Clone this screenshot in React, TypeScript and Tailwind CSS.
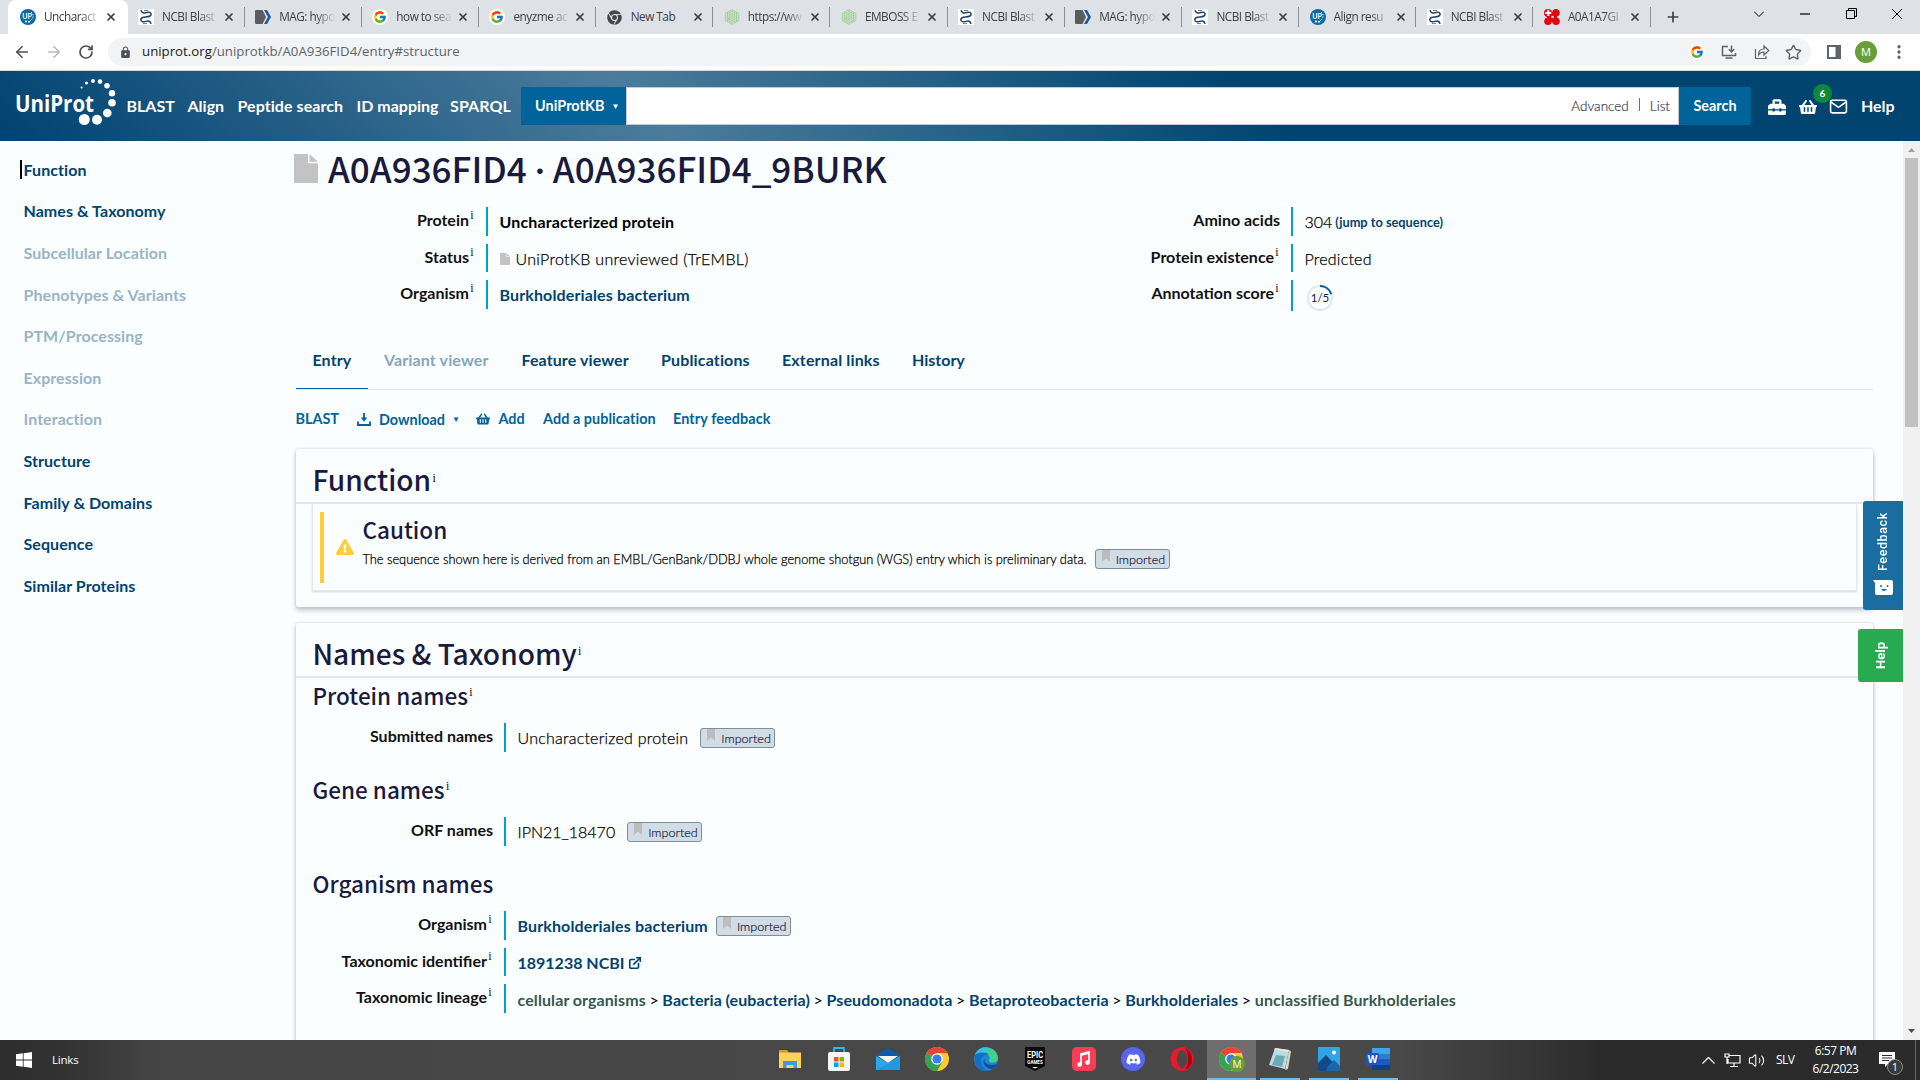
import React from "react";
import { ArrowLeft, ArrowRight, RotateCw, X, Plus, MoreVertical, Star, Volume2 } from "lucide-react";
import { FcGoogle } from "react-icons/fc";
import { FaShoppingBasket, FaToolbox, FaDiscord, FaExclamationTriangle, FaChrome } from "react-icons/fa";
import { FiMail, FiExternalLink } from "react-icons/fi";
import { MdLock } from "react-icons/md";

const UniFav = () => (
  <svg width="16" height="16" viewBox="0 0 16 16">
    <circle cx="8" cy="8" r="8" fill="#0b6aa2" />
    <text x="2.2" y="9.6" fontSize="7" fontWeight="700" fill="#fff" fontFamily="Lato">UP</text>
    <path d="M11 3.500c3 1 3 6-1 8.500" stroke="#fff" strokeWidth="1" strokeDasharray="1.2 1.2" fill="none" />
    <circle cx="6" cy="12.500" r="1.100" fill="#fff" /><circle cx="9" cy="12.800" r="1" fill="#fff" />
  </svg>
);
const NcbiFav = () => (
  <svg width="16" height="16" viewBox="0 0 16 16">
    <rect width="16" height="16" fill="#fff" />
    <path d="M3 1.200C3.500 4 6 4.300 9 3.600s4.500.2 4 2.200-3 2-5.500 2.100S2.600 9 2.800 11s3 2 5.200 1.400 4.500-.4 5 2.400" fill="none" stroke="#20406a" strokeWidth="1.500" />
    <path d="M6 1.500h4M5 14.600h4" stroke="#5d7899" strokeWidth="1" />
  </svg>
);
const MagFav = () => (
  <svg width="16" height="16" viewBox="0 0 16 16">
    <path d="M0 2a1 1 0 0 1 1-1h6.500L11 8l-3.500 7H1a1 1 0 0 1-1-1z" fill="#5b5c5f" />
    <path d="M9 1h3l4 7-4 7H9l4-7z" fill="#1b5a96" />
  </svg>
);
const GoogleFav = () => (
  <span className="flex size-4 items-center justify-center rounded-full bg-white"><FcGoogle size={14} /></span>
);
const ChromeDark = () => (
  <span className="flex size-4 items-center justify-center text-[#44474b]"><FaChrome size={15} /></span>
);
const EmbossFav = () => (
  <svg width="16" height="16" viewBox="0 0 16 16">
    <path d="M8 .5l6.800 3.700v7.600L8 15.500l-6.800-3.700V4.200z" fill="#c5dfc3" stroke="#8cc98a" strokeWidth="1" strokeDasharray="1 1" />
    <path d="M3.500 4v8M5.800 3v10.500M8 2v12M10.300 3v10.500M12.500 4v8" stroke="#8ac487" strokeWidth="1" strokeDasharray="1.200 1" />
    <rect x="4" y="9" width="1.500" height="1.500" fill="#f0a79a" />
  </svg>
);
const RedFav = () => (
  <svg width="16" height="16" viewBox="0 0 16 16" fill="#e30613">
    <circle cx="4" cy="4" r="4" /><circle cx="12" cy="3.800" r="3.800" /><circle cx="4" cy="12.200" r="3.800" /><circle cx="12" cy="12.200" r="3.800" />
    <rect x="3" y="3" width="10" height="10" />
    <path d="M4.300 1v6M1.300 4h6" stroke="#fff" strokeWidth="2" /><circle cx="8.500" cy="8" r="1.300" fill="#fff" opacity=".8" />
  </svg>
);

const tabs: { t: string; f: () => React.JSX.Element }[] = [
  { t: "Uncharact", f: UniFav },
  { t: "NCBI Blast", f: NcbiFav },
  { t: "MAG: hypo", f: MagFav },
  { t: "how to sea", f: GoogleFav },
  { t: "enyzme ac", f: GoogleFav },
  { t: "New Tab", f: ChromeDark },
  { t: "https://ww", f: EmbossFav },
  { t: "EMBOSS E", f: EmbossFav },
  { t: "NCBI Blast", f: NcbiFav },
  { t: "MAG: hypo", f: MagFav },
  { t: "NCBI Blast", f: NcbiFav },
  { t: "Align resu", f: UniFav },
  { t: "NCBI Blast", f: NcbiFav },
  { t: "A0A1A7GI", f: RedFav },
];

function TabStrip() {
  return (
    <div className="flex h-[34px] bg-[#dee1e6] pl-2 font-['Open_Sans',sans-serif]">
      {tabs.map(({ t, f: Fav }, i) => (
        <div
          key={i}
          className={
            i === 0
              ? "flex h-[34px] w-[119.500px] shrink-0 items-center rounded-t-lg bg-white pl-3"
              : "flex h-[34px] w-[117.170px] shrink-0 items-center pl-[10.500px]"
          }
        >
          <Fav />
          <span
            className={
              "ml-2 w-[59px] whitespace-nowrap text-[11.800px] tracking-[-0.500px] text-[#3c4043] " +
              (t === "New Tab" ? "" : "[mask-image:linear-gradient(90deg,#000_62%,transparent_96%)]")
            }
          >
            {t}
          </span>
          <X size={12} strokeWidth={3.400} className="ml-[2px] shrink-0 text-[#3c4043]" />
          {i > 0 && <span className="ml-auto h-5 w-px bg-[#8a8d91]" />}
        </div>
      ))}
      <Plus size={16} strokeWidth={2.500} className="ml-[14px] mt-[9px] text-[#3c4043]" />
      <div className="ml-auto flex text-black">
        <svg width="10" height="6" viewBox="0 0 10 6" className="mr-[36px] mt-[11px]" fill="none" stroke="#000"><path d="M0 .5l5 5 5-5" /></svg>
        <svg width="10" height="2" viewBox="0 0 10 2" className="mr-[36px] mt-[13px]"><path d="M0 1h10" stroke="#000" strokeWidth="1.200" /></svg>
        <svg width="12" height="12" viewBox="0 0 12 12" className="mr-[33px] mt-[8px]" fill="none" stroke="#000"><path d="M.5 2.500h8v8h-8zM2.500 2.500v-2h8v8h-2" /></svg>
        <svg width="12" height="12" viewBox="0 0 12 12" className="mr-[17px] mt-[8px]" stroke="#000"><path d="M1 1l10 10M11 1L1 11" /></svg>
      </div>
    </div>
  );
}

function Toolbar() {
  return (
    <div className="flex h-[37px] items-center border-b border-[#d5d7da] bg-white font-['Open_Sans',sans-serif]">
      <ArrowLeft size={18} strokeWidth={2.200} className="ml-[13px] text-[#4d5156]" />
      <ArrowRight size={18} strokeWidth={2.200} className="ml-[14px] text-[#b9bbbe]" />
      <RotateCw size={16} strokeWidth={2.600} className="ml-[15px] text-[#4d5156]" />
      <div className="ml-[14px] flex h-7 w-[1703px] items-center rounded-full bg-[#f1f3f4] pl-[11px] pr-[9px]">
        <MdLock size={13} className="text-[#4d5156]" />
        <span className="ml-[10px] whitespace-nowrap text-[13.250px] text-[#5f6368]">
          <span className="text-[#202124]">uniprot.org</span>/uniprotkb/A0A936FID4/entry#structure
        </span>
        <span className="ml-auto flex size-4 items-center justify-center rounded-full bg-white"><FcGoogle size={14} /></span>
        <svg className="ml-[16px]" width="16" height="16" viewBox="0 0 16 16" fill="none" stroke="#5f6368" strokeWidth="1.500"><path d="M7 2.500H1.500v9h13V9M4.500 14h7M10.500 1.500v6M7.800 5.200l2.700 2.700 2.700-2.700" /></svg>
        <svg className="ml-[17px]" width="16" height="16" viewBox="0 0 16 16" fill="none" stroke="#5f6368" strokeWidth="1.200"><path d="M1.500 5v9.500H12V12M4.500 11c0-4 2-6 5.500-6V2l4.800 4.500L10 11V8c-2.500 0-4.200.8-5.500 3z" /></svg>
        <Star size={17} strokeWidth={2} className="ml-[15px] text-[#5f6368]" />
      </div>
      <svg className="ml-[16px]" width="14" height="14" viewBox="0 0 14 14"><path d="M1 1h12v12H1z" fill="none" stroke="#5f6368" strokeWidth="2" /><path d="M8.500 1H13v12H8.500z" fill="#5f6368" /></svg>
      <span className="ml-[14px] flex size-[22px] items-center justify-center rounded-full bg-[#689f38] text-[11px] text-white">M</span>
      <MoreVertical size={18} strokeWidth={2.400} className="ml-[13px] text-[#5f6368]" />
    </div>
  );
}

function Logo() {
  return (
    <svg width="119" height="70" viewBox="0 71 119 70" fill="#fff">
      <text x="15" y="111.500" fontSize="24" fontWeight="700" fontFamily="Open Sans" textLength="79" lengthAdjust="spacingAndGlyphs">UniProt</text>
      <circle cx="81.600" cy="87.600" r="1" /><circle cx="86.500" cy="83" r="1.500" /><circle cx="93" cy="81" r="1.900" />
      <circle cx="100" cy="81.600" r="2.300" /><circle cx="107" cy="85.700" r="2.800" /><circle cx="112" cy="93.200" r="3.200" />
      <circle cx="112" cy="102.700" r="3.800" /><circle cx="107.300" cy="113" r="4.300" /><circle cx="97" cy="119.700" r="5" /><circle cx="84.300" cy="119.500" r="5.500" />
    </svg>
  );
}

function Header() {
  return (
    <header className="flex h-[70px] bg-[linear-gradient(45deg,#004271_0%,#4b7c9c_34%,#00446f_65%)] text-[16px] font-bold text-white">
      <Logo />
      <nav className="flex whitespace-nowrap pl-[7.500px] pt-[23px] leading-6">
        <span className="w-[61px]">BLAST</span>
        <span className="w-[50px]">Align</span>
        <span className="w-[119px] tracking-[0.060px]">Peptide search</span>
        <span className="w-[93.500px]">ID mapping</span>
        <span className="w-[71px] tracking-[0.100px]">SPARQL</span>
      </nav>
      <div className="mt-4 flex h-[38px]">
        <div className="flex w-[105px] items-center bg-[#00639a] pl-[14px] text-[14.400px]">
          <span className="tracking-[0.060px]">UniProtKB</span><span className="ml-[7px] text-[8px]">▼</span>
        </div>
        <div className="flex w-[1053px] items-center justify-end border border-[#c5cad0] bg-white pr-[8px] text-[13.500px] font-light text-[#3a3a58] [-webkit-text-stroke:0.200px]">
          <span>Advanced</span><span className="mx-[10px] mb-1 h-[13px] w-px bg-[#6c6c80]" /><span>List</span>
        </div>
        <div className="flex w-[72px] items-center justify-center bg-[#00639a] text-[14.400px]">Search</div>
      </div>
      <div className="flex pl-[17px] pt-[26px]">
        <FaToolbox size={18} className="mt-px" />
        <div className="relative ml-[13px] mt-px h-[18px] w-[18px]">
          <FaShoppingBasket size={18} />
          <span className="absolute -top-[14px] left-[14px] flex size-[19px] items-center justify-center rounded-full bg-[#0c8a3c] text-[10px]">6</span>
        </div>
        <FiMail size={19} className="ml-[12px]" />
        <span className="ml-[13px] -mt-px leading-5">Help</span>
      </div>
    </header>
  );
}

const side: [string, boolean][] = [
  ["Function", true], ["Names & Taxonomy", true], ["Subcellular Location", false], ["Phenotypes & Variants", false],
  ["PTM/Processing", false], ["Expression", false], ["Interaction", false], ["Structure", true],
  ["Family & Domains", true], ["Sequence", true], ["Similar Proteins", true],
];

function Sidebar() {
  return (
    <aside className="w-[294px] shrink-0 pt-[8px] text-[16px] font-bold tracking-[0.060px]">
      {side.map(([t, on], i) => (
        <div key={t} className="flex h-[41.600px] items-center pl-5">
          <span className={i === 0 ? "h-[19px] w-0.5 bg-black" : "w-0.5"} />
          <span className={on ? "ml-[1.500px] text-[#014371]" : "ml-[1.500px] text-[#99b4c6]"}>{t}</span>
        </div>
      ))}
    </aside>
  );
}

const Sup = ({ cls = "-top-[7px]" }: { cls?: string }) => (
  <span className={"relative inline-block w-[6px] text-center font-['Liberation_Serif',serif] text-[12px] font-normal leading-none text-[#111] " + cls}>i</span>
);

const FileIcon = ({ w, h }: { w: number; h: number }) => (
  <svg width={w} height={h} viewBox="0 0 24 28" preserveAspectRatio="none" fill="#c3c3c3"><path d="M0 0h14v9h10v19H0zM15.500 0L24 7.500h-8.500z" /></svg>
);

function Row({ label, sup, w, h, children }: { label: string; sup?: boolean; w: string; h?: string; children: React.ReactNode }) {
  return (
    <div className={"mb-[8px] flex text-[16px] " + (h ?? "h-[28.600px]")}>
      <div className={"shrink-0 text-right font-bold leading-[26.500px] text-[#111] " + w}>{label}{sup && <Sup />}</div>
      <div className="ml-[11px] flex items-center whitespace-nowrap border-l-2 border-[#009fd6] pl-[11.500px] pt-[2px] font-light text-[#000]">{children}</div>
    </div>
  );
}

const light = "[-webkit-text-stroke:0.250px] tracking-[0.230px]";

const Imported = ({ cls }: { cls: string }) => (
  <span className={"flex h-5 w-[75px] shrink-0 items-start rounded-[3px] border border-[#7c8e9e] bg-[#d2dce4] pl-[6px] text-[12.600px] font-light leading-[20px] tracking-normal text-[#1b1b3c] [-webkit-text-stroke:0.200px] " + cls}>
    <svg width="8" height="12" viewBox="0 0 8 12" className="mr-[6px]"><path d="M0 0h8v12L4 8.500 0 12z" fill="#bdbcbc" /></svg>
    Imported
  </span>
);

const head = "font-['Noto_Sans_CJK_SC',sans-serif] font-medium text-[#1a1a3c]";
const card = "rounded-[3px] bg-[#fbfeff] shadow-[0_3px_5px_#bcbfcd,0_0_3px_#cfd3da]";
const link = "font-bold tracking-[0.130px] text-[#014371]";

function Entry() {
  return (
    <main className="w-[1579px] shrink-0">
      <div className="flex h-[66px] pt-[13px]">
        <FileIcon w={24} h={29} />
        <h1 className={head + " ml-[10px] -mt-px flex whitespace-nowrap text-[35.100px] leading-[30px]"}>
          A0A936FID4<span className="w-[26px] text-center font-['Lato',sans-serif]">·</span>A0A936FID4_9BURK
        </h1>
      </div>
      <div className="flex h-[119px]">
        <div className="w-[805px]">
          <Row label="Protein" sup w="w-[181px]"><span className="font-bold tracking-[0.130px]">Uncharacterized protein</span></Row>
          <Row label="Status" sup w="w-[181px]"><FileIcon w={10} h={12} /><span className="ml-1.5 tracking-[0.300px] [-webkit-text-stroke:0.250px]">UniProtKB unreviewed (TrEMBL)</span></Row>
          <Row label="Organism" sup w="w-[181px]"><span className={link}>Burkholderiales bacterium</span></Row>
        </div>
        <div>
          <Row label="Amino acids" w="w-[181px]"><span className="[-webkit-text-stroke:0.250px]">304</span><span className="ml-[3px] mt-px text-[12.800px] font-bold text-[#014371]">(jump to sequence)</span></Row>
          <Row label="Protein existence" sup w="w-[181px]"><span className={light}>Predicted</span></Row>
          <Row label="Annotation score" sup w="w-[181px]" h="h-[31px]">
            <svg width="26" height="26" viewBox="0 0 26 26" className="ml-[2px] mt-0.5">
              <circle cx="13" cy="13" r="12" fill="none" stroke="#e2e7ea" strokeWidth="2" />
              <path d="M13 1a12 12 0 0 1 11.400 8.300" fill="none" stroke="#00639a" strokeWidth="2" />
              <text x="13" y="17" textAnchor="middle" fontSize="11.500" fontWeight="400" fill="#1a1a3c" fontFamily="Lato">1/5</text>
            </svg>
          </Row>
        </div>
      </div>
      <div className="ml-0.5 flex h-[63.500px] border-b border-[#e2e6e8] pt-[1px] text-[16px] font-bold text-[#014371]">
        <span className="h-[62px] w-[72px] border-b border-[#00639a] pl-[16.500px] pt-[21px] tracking-[0.100px]">Entry</span>
        <span className="w-[137px] pl-4 pt-[21px] tracking-[0.130px] text-[#86a6bb]">Variant viewer</span>
        <span className="w-[140px] pl-[16.500px] pt-[21px] tracking-[0.100px]">Feature viewer</span>
        <span className="w-[121px] pl-4 pt-[21px] tracking-[0.150px]">Publications</span>
        <span className="w-[130px] pl-4 pt-[21px] tracking-[0.150px]">External links</span>
        <span className="pl-4 pt-[21px]">History</span>
      </div>
      <div className="ml-[1.500px] flex h-[59.500px] items-center text-[14.400px] font-bold text-[#00639a]">
        <span className="-mt-px w-[61px]">BLAST</span>
        <svg width="14" height="13" viewBox="0 0 14 13" fill="none" stroke="#00639a" strokeWidth="1.800"><path d="M1 8.500V12h12V8.500M7 0v6" /><path d="M3.800 4.500h6.400L7 8.800z" fill="#00639a" stroke="none" /></svg>
        <span className="ml-[8.500px] mt-[1.500px] w-[73px]">Download</span>
        <span className="w-[24px] text-[8px]">▼</span>
        <FaShoppingBasket size={14} />
        <span className="-mt-px ml-[8.500px] w-[44.500px]">Add</span>
        <span className="-mt-px w-[130px] tracking-[0.060px]">Add a publication</span>
        <span className="-mt-px tracking-[0.100px]">Entry feedback</span>
      </div>
      <section className={card + " ml-0.5 h-[158px]"}>
        <h2 className={head + " h-[55px] whitespace-nowrap border-b-2 border-[#e2e6e9] pl-[16.500px] pt-[6px] text-[28.100px] leading-[48px]"}>Function<Sup cls="-top-[9.500px]" /></h2>
        <div className="mx-4 flex h-[87px] border border-t-0 border-[#e6e9ec] pl-[7px] pt-2 shadow-[0_1px_2px_#d5d8dc]">
          <div className="h-[71px] w-1 bg-[#ffcc33]" />
          <FaExclamationTriangle size={18} className="ml-3 mt-[26px] text-[#ffcc33]" />
          <div className="ml-[8.500px]">
            <h3 className={head + " text-[22.500px] leading-[34px]"}>Caution</h3>
            <div className="mt-[3px] flex h-5 items-center whitespace-nowrap text-[12.800px] font-light text-[#000]">
              <span className="mt-[2px] [-webkit-text-stroke:0.250px]">The sequence shown here is derived from an EMBL/GenBank/DDBJ whole genome shotgun (WGS) entry which is preliminary data.</span>
              <Imported cls="ml-2" />
            </div>
          </div>
        </div>
      </section>
      <section className={card + " ml-0.5 mt-4 h-[480px]"}>
        <h2 className={head + " h-[55px] whitespace-nowrap border-b-2 border-[#e2e6e9] pl-[16.500px] pt-[6px] text-[28.100px] leading-[48px]"}>Names &amp; Taxonomy<Sup cls="-top-[10px]" /></h2>
        <h3 className={head + " h-[45px] pl-[16.500px] text-[22.500px] leading-[34px]"}>Protein names<Sup cls="-top-[9px]" /></h3>
        <Row label="Submitted names" w="w-[197px]"><span className={light}>Uncharacterized protein</span><Imported cls="ml-3" /></Row>
        <h3 className={head + " mt-[27px] h-[38.500px] pl-[16.500px] text-[22.500px] leading-[21px]"}>Gene names<Sup cls="-top-[9px]" /></h3>
        <Row label="ORF names" w="w-[197px]"><span className="[-webkit-text-stroke:0.250px]">IPN21_18470</span><Imported cls="ml-3" /></Row>
        <h3 className={head + " mt-[27px] h-[38.500px] pl-[16.500px] text-[22.500px] leading-[21px]"}>Organism names</h3>
        <Row label="Organism" sup w="w-[197px]"><span className={link}>Burkholderiales bacterium</span><Imported cls="ml-2" /></Row>
        <Row label="Taxonomic identifier" sup w="w-[197px]"><span className="font-bold text-[#014371]">1891238 NCBI</span><FiExternalLink size={14} strokeWidth={2.800} className="ml-[3px] text-[#014371]" /></Row>
        <Row label="Taxonomic lineage" sup w="w-[197px]">
          <span className="font-bold tracking-[0.100px] text-[#014371] [word-spacing:-0.400px]">
            <span className="text-[#35584f]">cellular organisms</span> <span className="font-normal text-black">&gt;</span> Bacteria (eubacteria) <span className="font-normal text-black">&gt;</span> Pseudomonadota <span className="font-normal text-black">&gt;</span> Betaproteobacteria <span className="font-normal text-black">&gt;</span> Burkholderiales <span className="font-normal text-black">&gt;</span> <span className="text-[#35584f]">unclassified Burkholderiales</span>
          </span>
        </Row>
      </section>
    </main>
  );
}

const ChromeLogo = () => (
  <svg width="24" height="24" viewBox="0 0 24 24">
    <circle cx="12" cy="12" r="12" fill="#fcc934" />
    <path d="M12 12L1.600 6A12 12 0 0 1 22.400 6H12z" fill="#e94335" />
    <path d="M12 12L1.600 6A12 12 0 0 0 12 24l5.200-9z" fill="#34a353" />
    <circle cx="12" cy="12" r="5.800" fill="#fff" /><circle cx="12" cy="12" r="4.600" fill="#3b7ded" />
  </svg>
);

const icons: React.ReactNode[] = [
  <svg width="22" height="20" viewBox="0 0 22 20"><path d="M0 1h8l2 3H0z" fill="#d99a0b" /><path d="M0 3.500h22V19H0z" fill="#ffd25e" /><path d="M4 12h14v7h-3.500v-3h-7v3H4z" fill="#3f9be0" /></svg>,
  <svg width="24" height="24" viewBox="0 0 24 24"><path d="M7 6V1h10v5" fill="none" stroke="#2fb5e6" strokeWidth="1.800" /><rect x="1" y="5" width="22" height="19" rx="2" fill="#f4f4f4" /><path d="M7 10h4.500v4.500H7z" fill="#f25022" /><path d="M12.500 10H17v4.500h-4.500z" fill="#7fba00" /><path d="M7 15.500h4.500V20H7z" fill="#00a4ef" /><path d="M12.500 15.500H17V20h-4.500z" fill="#ffb900" /></svg>,
  <svg width="24" height="24" viewBox="0 0 24 24"><path d="M0 9l12-8 12 8v3H0z" fill="#0b5cad" /><path d="M2 9h20l-10 7z" fill="#f5f5f5" /><path d="M0 9l12 7L24 9v14H0z" fill="#28a8ea" /><path d="M0 23l24-13v13z" fill="#1b8fe0" opacity=".6" /></svg>,
  <ChromeLogo />,
  <svg width="24" height="24" viewBox="0 0 24 24"><circle cx="12" cy="12" r="12" fill="#1c86d8" /><path d="M1 8C4 1 12-1 18 2s7 10 5 12-8 2-8 0 2-3 0-5C12 5 5 4 1 8z" fill="#43d08c" /><path d="M1 8C5 3 12 4 15 8c-4-1-8 1-8 6 0 4 3 9 8 9.600C7 26-1 19 1 8z" fill="#1270c0" /><path d="M1 8C4 1 10-1 15 1c-2 2-4 4-3 5-4-1-8-1-11 2z" fill="#37bfe8" /><path d="M11 11c-2 4 2 9 12 6-1 2-3 4-5 5-6 0-11-6-7-11z" fill="#0c4f93" /></svg>,
  <svg width="22" height="24" viewBox="0 0 22 24"><path d="M2 0h18a1 1 0 0 1 1 1v18l-10 5-10-5V1a1 1 0 0 1 1-1z" fill="#0a0a0a" /><text x="11" y="11" fontSize="9.500" fontWeight="700" fill="#fff" textAnchor="middle" fontFamily="Roboto" textLength="16" lengthAdjust="spacingAndGlyphs">EPIC</text><text x="11" y="17" fontSize="4.500" fontWeight="700" fill="#fff" textAnchor="middle" fontFamily="Roboto">GAMES</text><path d="M8 20h6l-3 1.500z" fill="#fff" /></svg>,
  <svg width="24" height="24" viewBox="0 0 24 24"><rect width="24" height="24" rx="5" fill="#fb3c55" /><path d="M9 17.500V7l8-2v10.500" fill="none" stroke="#fff" strokeWidth="1.800" /><path d="M9 6.500l8-2v2.500l-8 2z" fill="#fff" /><circle cx="7.600" cy="17.600" r="2.300" fill="#fff" /><circle cx="15.500" cy="15.600" r="2.300" fill="#fff" /></svg>,
  <span className="flex size-6 items-center justify-center rounded-full bg-[#5865f2] text-white"><FaDiscord size={15} /></span>,
  <svg width="24" height="24" viewBox="0 0 24 24"><ellipse cx="12" cy="12" rx="11.500" ry="12" fill="#e8192c" /><path d="M15 1a12 12 0 0 1 0 22c4-5 4-17 0-22z" fill="#a70014" /><ellipse cx="12" cy="12" rx="5" ry="9" fill="#484848" /></svg>,
  <div className="relative"><ChromeLogo /><span className="absolute left-[10px] top-[9px] flex size-4 items-center justify-center rounded-full bg-[#689f38] text-[10px] text-white">M</span></div>,
  <svg width="24" height="24" viewBox="0 0 24 24"><path d="M7 1l14 2-4 19L1 18z" fill="#b9dde2" /><path d="M7 1l14 2-.6 2L6.300 3z" fill="#e8e4d4" /><path d="M21 3l2 1.500-3 17.500-3 1z" fill="#d9d2bd" /><path d="M8 8l9 1-3 11-10-2z" fill="#6fa9b8" /></svg>,
  <svg width="22" height="24" viewBox="0 0 22 24"><rect width="22" height="24" rx="1" fill="#2fa4e7" /><path d="M0 16l8-8 14 15v1H0z" fill="#134a86" /><path d="M10 19l6-6 6 6v5H8z" fill="#1d66ab" /><circle cx="16" cy="5.500" r="2" fill="#fff" /></svg>,
  <svg width="24" height="24" viewBox="0 0 24 24"><path d="M6 1h18v6H6z" fill="#41a5ee" /><path d="M6 7h18v5.500H6z" fill="#2b7cd3" /><path d="M6 12.500h18V18H6z" fill="#185abd" /><path d="M6 18h18v5H6z" fill="#103f91" /><rect y="6" width="13" height="12" rx="1" fill="#185abd" /><text x="6.500" y="15.800" fontSize="10" fontWeight="700" fill="#fff" textAnchor="middle" fontFamily="Open Sans">W</text></svg>,
];

function Taskbar() {
  return (
    <footer className="flex h-10 bg-[linear-gradient(90deg,#2d2d2d_0px,#333_70px,#464646_160px,#494949_1400px,#2b2b2b_1600px)] font-['Open_Sans',sans-serif] text-white">
      <svg width="16" height="16" viewBox="0 0 16 16" fill="#fff" className="ml-4 mt-3"><path d="M0 2.300L6.800 1.300v6.300H0zM7.600 1.200L16 0v7.600H7.600zM0 8.400h6.800v6.300L0 13.700zM7.600 8.400H16V16l-8.400-1.200z" /></svg>
      <span className="ml-5 w-[713.500px] pt-[11px] text-[11.500px] tracking-[-0.200px]">Links</span>
      {icons.map((ic, i) => (
        <div key={i} className={"flex w-[49px] shrink-0 flex-col items-center " + (i === 9 ? "bg-[#6e6e6e]" : "")}>
          <div className="flex h-[38px] w-full items-center justify-center">{ic}</div>
          {i === 9 && <div className="h-0.5 w-full bg-[#76b9ed]" />}
          {i > 9 && <div className="h-0.5 w-10 bg-[#76b9ed]" />}
        </div>
      ))}
      <div className="ml-auto flex">
        <svg width="13" height="7" viewBox="0 0 13 7" fill="none" stroke="#fff" strokeWidth="1.300" className="mr-[1px] mt-[17px]"><path d="M.5 6.500l6-6 6 6" /></svg>
        <svg width="17" height="15" viewBox="0 0 17 15" fill="none" stroke="#fff" strokeWidth="1.200" className="ml-[8px] mt-[13px]"><path d="M5 2.500h11v7.500H4V6M1 1h4v3H1zM3 4v7M10 10v3M6 13.500h8" /></svg>
        <Volume2 size={17} strokeWidth={1.500} className="ml-[7px] mt-[12px]" />
        <span className="ml-[11px] w-[36px] pt-[11px] text-[12px] tracking-[-0.500px]">SLV</span>
        <div className="w-[47px] whitespace-nowrap pt-[2px] text-center text-[12px] leading-[18px] tracking-[-0.500px]">6:57 PM<br />6/2/2023</div>
        <div className="relative ml-[20px] mt-3 h-6 w-[26px]">
          <svg width="16" height="16" viewBox="0 0 16 16"><path d="M0 0h16v12H9l-3 3v-3H0z" fill="#fff" /><path d="M3 3.500h10M3 6h10M3 8.500h7" stroke="#2b2b2b" /></svg>
          <span className="absolute left-[8px] top-[7px] flex size-4 items-center justify-center rounded-full border border-[#8a8a8a] bg-[#3a3a3a] text-[11px]">1</span>
        </div>
        <div className="ml-[10px] mr-[4px] w-px bg-[#6b6b6b]" />
      </div>
    </footer>
  );
}

export default function App() {
  return (
    <div className="relative flex h-[1080px] w-[1920px] flex-col overflow-hidden bg-[#fbfeff] font-['Lato',sans-serif]">
      <TabStrip />
      <Toolbar />
      <Header />
      <div className="flex h-[899px] overflow-hidden">
        <Sidebar />
        <Entry />
        <div className="ml-auto flex w-[17px] flex-col items-center bg-[#f0f0f0]">
          <svg width="7" height="4" viewBox="0 0 7 4" className="my-[6.500px] h-[4px]"><path d="M0 4l3.500-4L7 4z" fill="#a0a0a0" /></svg>
          <div className="h-[269px] w-[13px] bg-[#c1c1c1]" />
          <svg width="7" height="4" viewBox="0 0 7 4" className="mb-[7px] mt-auto"><path d="M0 0h7L3.500 4z" fill="#505050" /></svg>
        </div>
      </div>
      <Taskbar />
      <div className="absolute left-[1863px] top-[501px] flex h-[109px] w-10 flex-col items-center rounded-l-[3px] bg-[#1a6da1] text-white">
        <span className="mt-[12px] h-[58px] rotate-180 whitespace-nowrap font-['Roboto',sans-serif] text-[12.500px] font-medium leading-[14px] tracking-[0.600px] [writing-mode:vertical-rl]">Feedback</span>
        <svg width="20" height="15" viewBox="0 0 20 15" className="mt-[9px]"><path d="M0 0h18a2 2 0 0 1 2 2v11a2 2 0 0 1-2 2H4a2 2 0 0 1-2-2V3z" fill="#fff" /><circle cx="8" cy="6" r="1" fill="#1a6da1" /><circle cx="14.500" cy="6" r="1" fill="#1a6da1" /><path d="M8 9h6q-3 4-6 0z" fill="#1a6da1" /></svg>
      </div>
      <div className="absolute left-[1858px] top-[629px] flex h-[53px] w-[45px] items-center justify-center rounded-l-[3px] bg-[#27aa50] text-white">
        <span className="rotate-180 font-['Roboto',sans-serif] text-[13px] font-bold leading-4 [writing-mode:vertical-rl]">Help</span>
      </div>
    </div>
  );
}
